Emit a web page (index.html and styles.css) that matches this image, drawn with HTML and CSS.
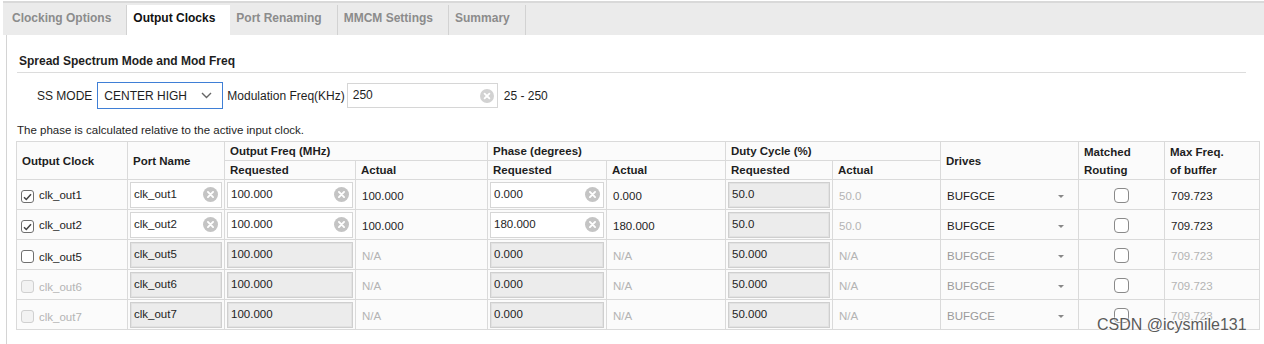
FILE: index.html
```html
<!DOCTYPE html>
<html>
<head>
  <meta charset="utf-8">
  <link rel="stylesheet" href="styles.css">
</head>
<body>
  <div class="tabs">
    <div class="tab">Clocking Options</div>
    <div class="tab active">Output Clocks</div>
    <div class="tab">Port Renaming</div>
    <div class="tab">MMCM Settings</div>
    <div class="tab">Summary</div>
  </div>

  <div class="panel">
    <div class="section-title">Spread Spectrum Mode and Mod Freq</div>

    <div class="ss-row">
      <span class="ss-label">SS MODE</span>
      <div class="select">
        <span>CENTER HIGH</span>
        <svg class="chevron" width="11" height="7" viewBox="0 0 11 7"><path d="M1 1l4.5 4.5L10 1" fill="none" stroke="#666" stroke-width="1.4"/></svg>
      </div>
      <span class="mod-label">Modulation Freq(KHz)</span>
      <div class="field mod-field">
        <span>250</span>
        <svg class="clear" width="14" height="14" viewBox="0 0 14 14"><circle cx="7" cy="7" r="7" fill="#d2d2d2"/><path d="M4.6 4.6l4.8 4.8M9.4 4.6l-4.8 4.8" stroke="#fff" stroke-width="1.8" stroke-linecap="round"/></svg>
      </div>
      <span class="range">25 - 250</span>
    </div>

    <div class="note">The phase is calculated relative to the active input clock.</div>

    <table class="clocks">
      <colgroup>
        <col style="width:111px"><col style="width:97px">
        <col style="width:131px"><col style="width:132px">
        <col style="width:119px"><col style="width:119px">
        <col style="width:107px"><col style="width:108px">
        <col style="width:138px"><col style="width:86px"><col style="width:95px">
      </colgroup>
      <thead>
        <tr>
          <th rowspan="2">Output Clock</th>
          <th rowspan="2">Port Name</th>
          <th colspan="2">Output Freq (MHz)</th>
          <th colspan="2">Phase (degrees)</th>
          <th colspan="2">Duty Cycle (%)</th>
          <th rowspan="2">Drives</th>
          <th rowspan="2">Matched<br>Routing</th>
          <th rowspan="2">Max Freq.<br>of buffer</th>
        </tr>
        <tr>
          <th>Requested</th><th>Actual</th>
          <th>Requested</th><th>Actual</th>
          <th>Requested</th><th>Actual</th>
        </tr>
      </thead>
      <tbody>
        <tr>
          <td class="txt"><span class="check on"><svg width="9" height="8" viewBox="0 0 9 8"><path d="M1 4.2l2.3 2.3L8 1.2" fill="none" stroke="#444" stroke-width="1.5"/></svg></span>clk_out1</td>
          <td class="inp"><div class="field"><span>clk_out1</span><svg class="clear" width="15" height="15" viewBox="0 0 14 14"><circle cx="7" cy="7" r="7" fill="#c4c4c4"/><path d="M4.6 4.6l4.8 4.8M9.4 4.6l-4.8 4.8" stroke="#fff" stroke-width="1.8" stroke-linecap="round"/></svg></div></td>
          <td class="inp"><div class="field"><span>100.000</span><svg class="clear" width="15" height="15" viewBox="0 0 14 14"><circle cx="7" cy="7" r="7" fill="#c4c4c4"/><path d="M4.6 4.6l4.8 4.8M9.4 4.6l-4.8 4.8" stroke="#fff" stroke-width="1.8" stroke-linecap="round"/></svg></div></td>
          <td class="txt">100.000</td>
          <td class="inp"><div class="field"><span>0.000</span><svg class="clear" width="15" height="15" viewBox="0 0 14 14"><circle cx="7" cy="7" r="7" fill="#c4c4c4"/><path d="M4.6 4.6l4.8 4.8M9.4 4.6l-4.8 4.8" stroke="#fff" stroke-width="1.8" stroke-linecap="round"/></svg></div></td>
          <td class="txt">0.000</td>
          <td class="inp"><div class="field off"><span>50.0</span></div></td>
          <td class="txt dim">50.0</td>
          <td class="txt"><div class="drive"><span>BUFGCE</span><span class="caret"></span></div></td>
          <td class="box"><span class="check big"></span></td>
          <td class="txt">709.723</td>
        </tr>
        <tr>
          <td class="txt"><span class="check on"><svg width="9" height="8" viewBox="0 0 9 8"><path d="M1 4.2l2.3 2.3L8 1.2" fill="none" stroke="#444" stroke-width="1.5"/></svg></span>clk_out2</td>
          <td class="inp"><div class="field"><span>clk_out2</span><svg class="clear" width="15" height="15" viewBox="0 0 14 14"><circle cx="7" cy="7" r="7" fill="#c4c4c4"/><path d="M4.6 4.6l4.8 4.8M9.4 4.6l-4.8 4.8" stroke="#fff" stroke-width="1.8" stroke-linecap="round"/></svg></div></td>
          <td class="inp"><div class="field"><span>100.000</span><svg class="clear" width="15" height="15" viewBox="0 0 14 14"><circle cx="7" cy="7" r="7" fill="#c4c4c4"/><path d="M4.6 4.6l4.8 4.8M9.4 4.6l-4.8 4.8" stroke="#fff" stroke-width="1.8" stroke-linecap="round"/></svg></div></td>
          <td class="txt">100.000</td>
          <td class="inp"><div class="field"><span>180.000</span><svg class="clear" width="15" height="15" viewBox="0 0 14 14"><circle cx="7" cy="7" r="7" fill="#c4c4c4"/><path d="M4.6 4.6l4.8 4.8M9.4 4.6l-4.8 4.8" stroke="#fff" stroke-width="1.8" stroke-linecap="round"/></svg></div></td>
          <td class="txt">180.000</td>
          <td class="inp"><div class="field off"><span>50.0</span></div></td>
          <td class="txt dim">50.0</td>
          <td class="txt"><div class="drive"><span>BUFGCE</span><span class="caret"></span></div></td>
          <td class="box"><span class="check big"></span></td>
          <td class="txt">709.723</td>
        </tr>
        <tr>
          <td class="txt"><span class="check"></span>clk_out5</td>
          <td class="inp"><div class="field off"><span>clk_out5</span></div></td>
          <td class="inp"><div class="field off"><span>100.000</span></div></td>
          <td class="txt dim">N/A</td>
          <td class="inp"><div class="field off"><span>0.000</span></div></td>
          <td class="txt dim">N/A</td>
          <td class="inp"><div class="field off"><span>50.000</span></div></td>
          <td class="txt dim">N/A</td>
          <td class="txt grey"><div class="drive"><span>BUFGCE</span><span class="caret"></span></div></td>
          <td class="box"><span class="check big"></span></td>
          <td class="txt dim">709.723</td>
        </tr>
        <tr>
          <td class="txt dim"><span class="check disabled"></span>clk_out6</td>
          <td class="inp"><div class="field off"><span>clk_out6</span></div></td>
          <td class="inp"><div class="field off"><span>100.000</span></div></td>
          <td class="txt dim">N/A</td>
          <td class="inp"><div class="field off"><span>0.000</span></div></td>
          <td class="txt dim">N/A</td>
          <td class="inp"><div class="field off"><span>50.000</span></div></td>
          <td class="txt dim">N/A</td>
          <td class="txt grey"><div class="drive"><span>BUFGCE</span><span class="caret"></span></div></td>
          <td class="box"><span class="check big"></span></td>
          <td class="txt dim">709.723</td>
        </tr>
        <tr>
          <td class="txt dim"><span class="check disabled"></span>clk_out7</td>
          <td class="inp"><div class="field off"><span>clk_out7</span></div></td>
          <td class="inp"><div class="field off"><span>100.000</span></div></td>
          <td class="txt dim">N/A</td>
          <td class="inp"><div class="field off"><span>0.000</span></div></td>
          <td class="txt dim">N/A</td>
          <td class="inp"><div class="field off"><span>50.000</span></div></td>
          <td class="txt dim">N/A</td>
          <td class="txt grey"><div class="drive"><span>BUFGCE</span><span class="caret"></span></div></td>
          <td class="box"><span class="check big"></span></td>
          <td class="txt dim">709.723</td>
        </tr>
      </tbody>
    </table>
  </div>

  <div class="watermark">CSDN @icysmile131</div>
</body>
</html>
```

FILE: styles.css
```css
body {
  margin: 0;
  padding-top: 1px;
  font-family: "Liberation Sans", Arial, sans-serif;
  font-size: 11.5px;
  color: #1e1e1e;
  background-color: #fff;
  position: relative;
  height: 343px;
  overflow: hidden;
}

/* tab strip */
.tabs {
  display: flex;
  margin-left: 3px;
  padding-left: 3px;
  height: 32px;
  border-top: 2px solid #d9d9d9;
  background-color: #ebebeb;
}

.tab {
  margin-top: 2px;
  height: 30px;
  padding: 5px 15px 0 6px;
  box-sizing: border-box;
  font-size: 12px;
  line-height: 16px;
  font-weight: bold;
  color: #8c8c8c;
  border-right: 1px solid #d2d2d2;
}

.tab.active {
  background-color: #fff;
  color: #111;
  border-right: none;
}

/* main panel */
.panel {
  margin-left: 6px;
  border-left: 1px solid #d4d4d4;
  height: 309px;
  padding-left: 9px;
  padding-right: 5px;
}

.section-title {
  margin: 0 13px 0 1px;
  padding: 19px 0 4px 2px;
  line-height: 14px;
  font-size: 12px;
  font-weight: bold;
  border-bottom: 1px solid #dcdcdc;
}

.ss-row {
  display: flex;
  align-items: center;
  margin-top: 9px;
  height: 27px;
  font-size: 12px;
}

.ss-label {
  margin-left: 21px;
  margin-right: 5px;
}

.select {
  display: flex;
  align-items: center;
  justify-content: space-between;
  width: 126px;
  height: 27px;
  box-sizing: border-box;
  padding: 0 10px 0 6px;
  border: 1px solid #3f7fd6;
  background-color: #fff;
}

.mod-label {
  margin-left: 4px;
  margin-right: 2px;
}

.field {
  display: flex;
  align-items: center;
  justify-content: space-between;
  height: 26px;
  box-sizing: border-box;
  padding: 0 3px 0 3px;
  border: 1px solid #d6d6d6;
  background-color: #fff;
}

.field span {
  margin-top: -2px;
}

.mod-field {
  width: 151px;
  height: 25px;
  padding-left: 5px;
}

.range {
  margin-left: 6px;
}

.note {
  margin-top: 14px;
  padding-left: 1px;
  line-height: 14px;
}

/* clock table */
.clocks {
  margin-top: 4px;
  width: 1243px;
  table-layout: fixed;
  border-collapse: collapse;
  background-color: #fbfbfb;
}

.clocks th {
  height: 18px;
  padding: 0 5px;
  text-align: left;
  font-weight: bold;
  line-height: 18px;
  border: 1px solid #dadada;
}

.clocks td {
  height: 26px;
  border: 1px solid #dadada;
  white-space: nowrap;
}

.clocks td.txt {
  padding: 3px 6px 0 6px;
}

.clocks td.inp {
  padding: 0 2px;
}

.clocks td.box {
  text-align: center;
  padding-top: 2px;
}

.clocks td.dim {
  color: #b4b4b4;
}

.clocks td.grey {
  color: #9a9a9a;
}

.field.off {
  background-color: #ececec;
  border-color: #cfcfcf;
  box-shadow: inset 0 0 0 1px #e2e2e2;
}

.check {
  display: inline-flex;
  align-items: center;
  justify-content: center;
  width: 13px;
  height: 13px;
  box-sizing: border-box;
  margin: 0 5px 0 -2px;
  vertical-align: -2px;
  border: 1px solid #6f6f6f;
  border-radius: 3px;
  background-color: #fff;
}

.check.disabled {
  border-color: #d0d0d0;
  background-color: #f2f2f2;
}

.check.big {
  width: 15px;
  height: 15px;
  margin: 0;
  border-color: #8a8a8a;
  border-radius: 4px;
}

.drive {
  display: flex;
  align-items: center;
  justify-content: space-between;
  padding-right: 8px;
}

.caret {
  width: 0;
  height: 0;
  border-left: 3px solid transparent;
  border-right: 3px solid transparent;
  border-top: 3px solid #888;
}

.watermark {
  position: absolute;
  left: 1097px;
  top: 316px;
  font-size: 16px;
  color: #5a5a5a;
  text-shadow: 0 0 2px #fff, 0 0 2px #fff;
}
```
